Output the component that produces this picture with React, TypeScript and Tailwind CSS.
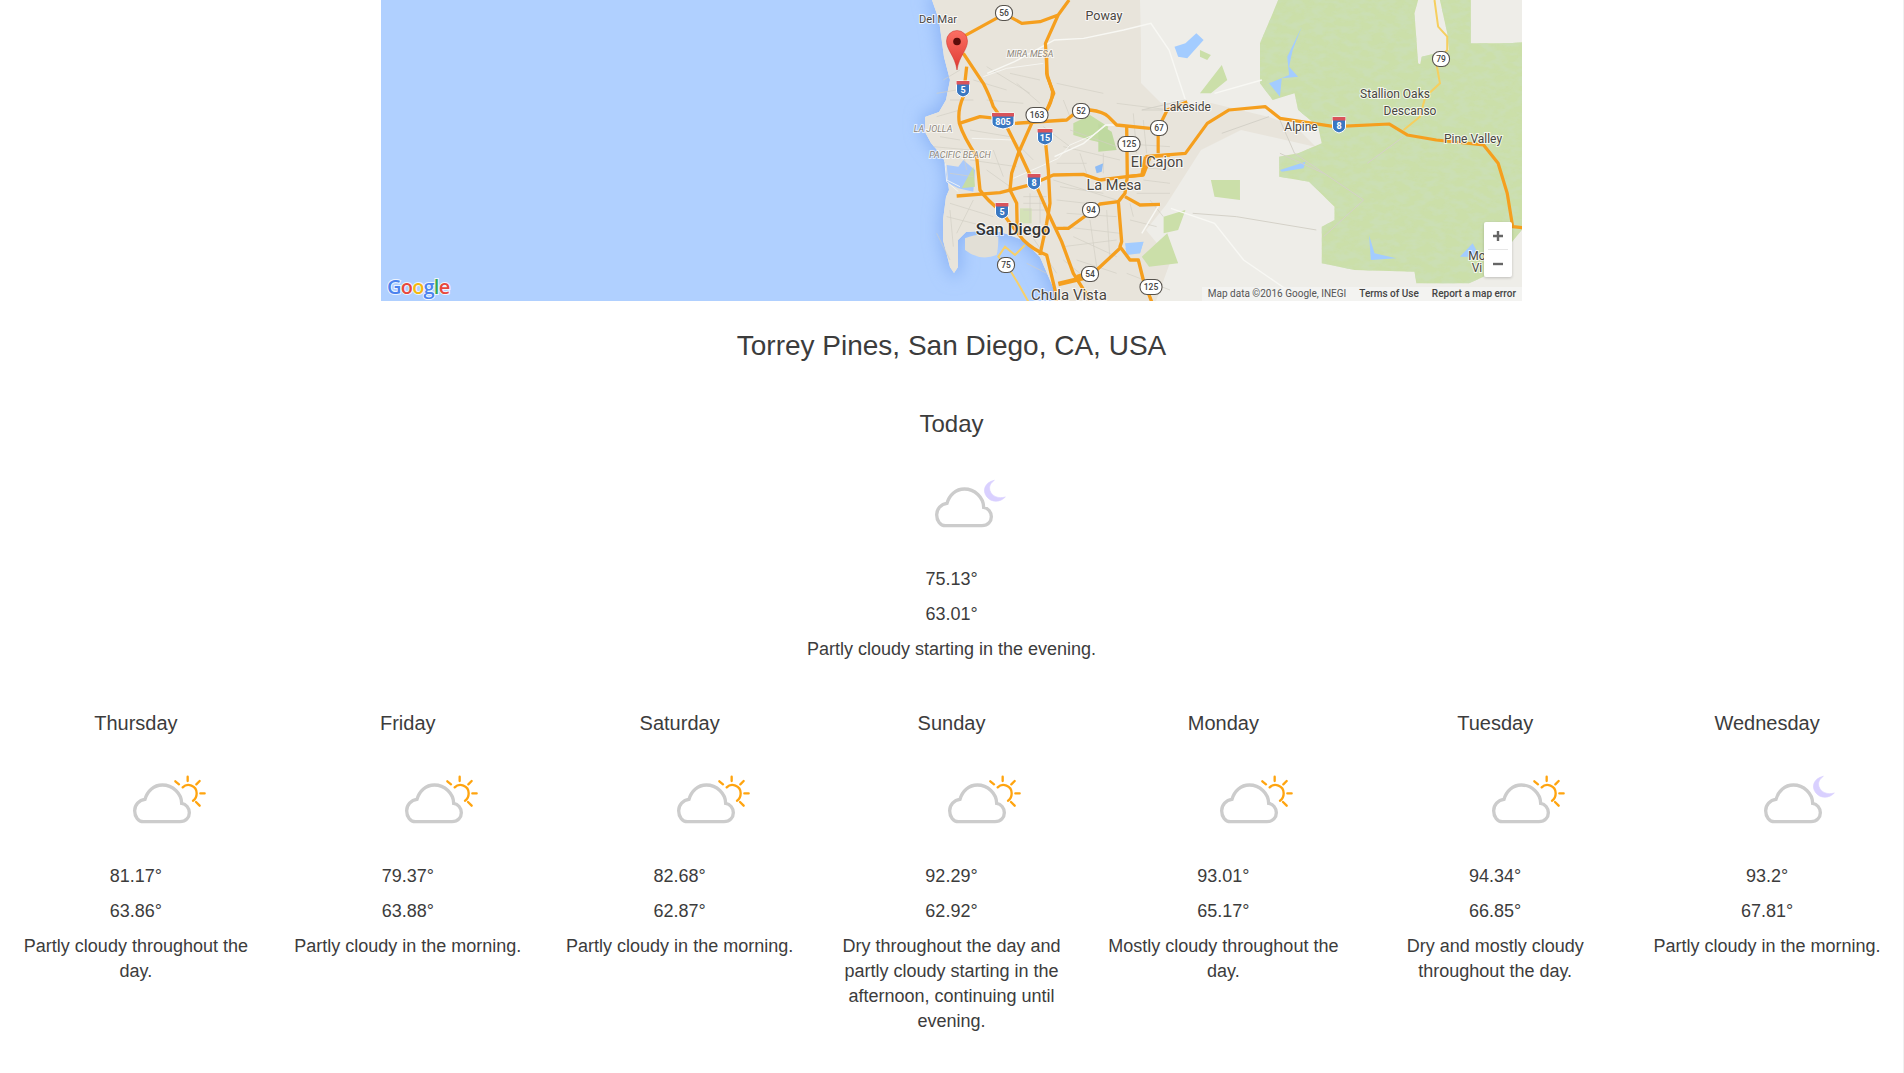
const days = [
  { name: "Thursday", hi: "81.17°", lo: "63.86°", text: "Partly cloudy throughout the day.", icon: "sun" },
  { name: "Friday", hi: "79.37°", lo: "63.88°", text: "Partly cloudy in the morning.", icon: "sun" },
  { name: "Saturday", hi: "82.68°", lo: "62.87°", text: "Partly cloudy in the morning.", icon: "sun" },
  { name: "Sunday", hi: "92.29°", lo: "62.92°", text: "Dry throughout the day and partly cloudy starting in the afternoon, continuing until evening.", icon: "sun" },
  { name: "Monday", hi: "93.01°", lo: "65.17°", text: "Mostly cloudy throughout the day.", icon: "sun" },
  { name: "Tuesday", hi: "94.34°", lo: "66.85°", text: "Dry and mostly cloudy throughout the day.", icon: "sun" },
  { name: "Wednesday", hi: "93.2°", lo: "67.81°", text: "Partly cloudy in the morning.", icon: "moon" },
];

const ORANGE = "#f59f1e";

const COAST =
  "M551,0 L558,20 L563,57 L569,80 L565,100 L558,112 L544,117 L544,132 L550,143 L562,157 L565,167 L568,190 L565,197 L562,220 L562,240 L569,267 L573,273 L577,267 L577,240 L585,232 L600,231 L620,232 L642,240 L659,257 L672,287 L676,301";

// coordenadas en px de los recortes del mapa
const roadsNear = [
  "M100,-20 L160,70 Q180,110 190,140 L225,190 L265,270 L300,345 L320,380 L355,460 L395,545 L430,640 L480,720",
  "M110,20 L100,110 Q82,150 88,190 Q100,230 140,290 L150,390 Q170,420 215,455 L240,490 L280,540 Q310,570 350,585 L375,690 L380,730",
  "M88,190 L150,170 L200,175 M255,190 L410,180 L440,155 L480,150 Q520,155 535,170 L560,195 L660,205",
  "M350,-10 L350,40 L368,95 Q365,130 350,150 L305,190 L265,280 L245,340 L240,390 L260,430 L262,520",
  "M345,230 L355,330 L360,430 L350,490 L330,585",
  "M80,408 L210,398 L300,375 L370,345 L460,343 L510,360 L590,350 L640,345 Q650,320 660,290 L720,285",
  "M590,195 L592,350 L585,400 L565,425 L575,545 L570,560 L600,600 L625,600 L640,660 L665,725",
  "M375,505 L415,505 L470,465 L510,432 L565,425 M585,410 L630,435 L690,433",
  "M440,650 L500,630 L570,565",
];

const cityStreets =
  "M20,170 L90,150 M30,230 L90,240 M10,260 L120,270 M60,120 L130,120 M130,60 L230,90 M170,120 L280,130 M120,210 L240,230 M240,40 L330,60 M380,70 L520,100 M400,120 L420,170 M560,130 L720,150 M610,160 L620,280 M640,180 L650,280 M560,250 L720,260 M420,210 L560,260 M400,260 L570,300 M450,280 L470,340 M520,280 L520,340 M60,430 L190,470 M50,470 L170,500 M80,520 L130,420 M280,410 L350,410 M280,430 L350,430 M280,450 L350,450 M300,400 L300,490 M330,400 L330,490 M370,360 L560,420 M380,420 L470,430 M410,460 L560,470 M400,500 L570,520 M430,530 L560,590 M400,560 L560,540 M400,600 L450,640 M480,480 L500,620 M530,450 L540,600 M300,520 L380,640 M290,610 L350,640 M610,320 L720,330 M640,360 L720,370 M620,400 L720,400 M600,480 L680,500 M120,300 L260,320 M170,330 L240,380 M190,270 L220,350 M100,280 L110,330 M250,240 L310,300 M340,200 L420,260 M60,450 L70,560 M20,520 L60,600 M380,310 L470,310 M40,60 L90,30 M20,100 L80,90 M60,340 L130,350 M390,380 L520,400 M600,430 L610,470 M660,420 L700,470 M440,600 L560,640 M590,640 L720,690 M170,20 L300,100 M260,70 L330,130";

const eastGreen =
  "M875,0 L860,40 L825,130 L825,250 L860,300 L920,280 L930,330 L985,380 L995,430 L930,460 L878,470 L878,530 L960,545 L1030,620 L1030,660 L995,680 L995,790 L1085,810 L1250,815 L1255,850 L1400,850 L1440,830 L1568,660 L1568,125 L1510,130 L1405,130 L1405,0 L1320,0 L1340,100 L1345,150 L1270,170 L1240,320 L1340,320 L1350,240 L1260,190 L1250,40 L1260,0 Z";

const shields: [number, number, string][] = [
  [623, 13, "56"], [656, 115, "163"], [700, 111, "52"], [778, 128, "67"], [748, 144, "125"],
  [710, 210, "94"], [625, 265, "75"], [709, 274, "54"], [770, 287, "125"], [1060, 59, "79"],
];

const interstates: [number, number, string][] = [
  [582, 89, "5"], [622, 121, "805"], [664, 137, "15"], [653, 182, "8"], [621, 211, "5"], [958, 125, "8"],
];

const labels: [number, number, string, number][] = [
  [557, 23, "Del Mar", 11], [723, 20, "Poway", 12.5], [806, 111, "Lakeside", 12], [1014, 98, "Stallion Oaks", 12],
  [1029, 115, "Descanso", 12], [920, 131, "Alpine", 12], [1092, 143, "Pine Valley", 12], [776, 167, "El Cajon", 14.5],
  [733, 190, "La Mesa", 14.5], [688, 300, "Chula Vista", 15], [1096, 260, "Mo", 12], [1096, 272, "Vi", 12],
];

const italics: [number, number, string][] = [
  [649, 57, "MIRA MESA"], [552, 132, "LA JOLLA"], [579, 158, "PACIFIC BEACH"],
];

function StateShield({ x, y, label }: { x: number; y: number; label: string }) {
  const w = label.length > 2 ? 22 : 17;
  return (
    <g>
      <rect x={x - w / 2} y={y - 7.5} width={w} height={15} rx={7} fill="#fff" stroke="#56524c" strokeWidth={1.1} />
      <text x={x} y={y + 3} textAnchor="middle" fontSize={8.5} fontWeight={500} fill="#444">{label}</text>
    </g>
  );
}

function Interstate({ x, y, label }: { x: number; y: number; label: string }) {
  const w = label.length > 2 ? 22 : label.length > 1 ? 15 : 13;
  const l = x - w / 2;
  return (
    <g>
      <path d={`M${l},${y - 8} h${w} v10 q0,4 -${w / 2},6 q-${w / 2},-2 -${w / 2},-6 Z`} fill="#3a78c2" stroke="#fff" strokeWidth={1} />
      <rect x={l} y={y - 8} width={w} height={3.5} fill="#d9535a" />
      <text x={x} y={y + 4} textAnchor="middle" fontSize={9} fontWeight={700} fill="#fff">{label}</text>
    </g>
  );
}

function MapArt() {
  return (
    <svg viewBox="0 0 1141 301" className="block h-[301px] w-[1141px] font-['Roboto',sans-serif]">
      <defs>
        <filter id="halo" x="-10%" y="-10%" width="120%" height="120%">
          <feGaussianBlur stdDeviation="8" />
        </filter>
        <filter id="terrain" x="0" y="0" width="100%" height="100%">
          <feTurbulence type="fractalNoise" baseFrequency="0.03 0.05" numOctaves="4" seed="7" result="noise" />
          <feColorMatrix
            in="noise"
            type="matrix"
            values="0 0 0 0 0.6  0 0 0 0 0.74  0 0 0 0 0.46  3 0 0 0 -1.15"
            result="tint"
          />
          <feComposite in="tint" in2="SourceAlpha" operator="in" result="shade" />
          <feMerge>
            <feMergeNode in="SourceGraphic" />
            <feMergeNode in="shade" />
          </feMerge>
        </filter>
        <linearGradient id="pin" x1="0" y1="0" x2="0" y2="1">
          <stop offset="0" stopColor="#fb6f64" />
          <stop offset="1" stopColor="#df3a32" />
        </linearGradient>
      </defs>
      <rect width="1141" height="301" fill="#b0d0ff" />
      <path d={`${COAST} L1141,301 L1141,0 Z`} fill="#8fb6f6" stroke="#8fb6f6" strokeWidth="8" filter="url(#halo)" />
      <path d={`${COAST} L1141,301 L1141,0 Z`} fill="#eeede8" />
      <path
        d={`${COAST} L775,301 L790,260 L765,230 L785,205 L820,150 L860,130 L935,147 L915,127 L888,117 L830,103 L780,103 L760,83 L760,43 L759,0 Z`}
        fill="#e8e4db"
      />

      {/* agua de Mission Bay, Coronado y parques */}
      <g transform="translate(549,60) scale(0.3333)">
        <path d="M50,315 L85,320 L100,300 L135,330 L130,395 L85,385 L55,370 Z" fill="#a9c9fb" />
        <path d="M95,385 L130,320 L135,380 Z" fill="#c5dca6" />
        <path d="M105,535 Q150,515 205,530 Q205,565 200,585 Q150,605 105,570 Z" fill="#e2dfd6" />
        <path d="M585,550 L640,545 L630,580 L590,580 Z" fill="#a3ccff" />
        <path d="M430,190 L480,165 L535,200 L520,250 L480,240 L430,225 Z" fill="#c4dca4" />
        <path d="M505,190 L545,215 L560,270 L505,275 Z" fill="#bfd9a0" />
        <path d="M270,445 L305,445 L305,490 L270,490 Z" fill="#d4e2b8" />
        <path d="M495,320 L520,310 L515,335 L500,340 Z" fill="#8ebcf5" />
        <path d={cityStreets} fill="none" stroke="#d2cec4" strokeWidth="2" />
        <path
          d="M160,50 L230,25 L340,10 M250,355 L330,320 L385,295 L420,255 L490,225 L530,195 L590,195 M125,235 L250,240 M45,310 L50,365 L85,395 M50,360 L90,380"
          fill="none"
          stroke="#f8f8f4"
          strokeWidth="2.5"
        />
      </g>

      {/* campo al este */}
      <g transform="translate(579,0) scale(0.3636,0.3333)">
        <path d={eastGreen} fill="#cbdfa9" filter="url(#terrain)" />
        <path
          d="M660,150 L690,165 L680,180 L660,170 Z M720,195 L735,240 L690,280 L660,280 Z M700,590 L690,540 L770,540 L770,600 Z M560,650 L620,630 L600,690 L560,700 Z M500,770 L570,700 L600,790 L520,800 Z"
          fill="#cbdfa9"
        />
        <path
          d="M590,140 L620,130 L650,100 L670,120 L625,175 L600,170 Z M940,80 L915,150 L905,200 L930,230 L885,235 L880,290 L850,250 L905,225 L900,170 Z M880,510 L950,485 L945,505 L885,515 Z M1125,705 L1130,780 L1200,775 L1140,760 Z M455,745 L505,725 L495,760 L460,765 Z M1375,770 L1410,730 L1430,770 Z"
          fill="#a3ccff"
        />
        <path
          d="M75,220 L150,185 L260,120 L340,115 L450,90 L525,70 L575,150 L620,300 M260,470 L340,430 L400,375 L430,375 M550,610 L500,700 M580,625 L700,670 L780,780 L900,870 M700,280 L830,240"
          fill="none"
          stroke="#f8f8f4"
          strokeWidth="1.4"
          vectorEffect="non-scaling-stroke"
        />
        <path
          d="M640,640 L760,650 L980,690 M620,300 L500,330 L690,330 M880,360 L920,460 L1110,600 L1000,710 M1220,410 L1120,490 M720,400 L850,350 M880,460 L1000,520"
          fill="none"
          stroke="#d4d1c8"
          strokeWidth="1"
          vectorEffect="non-scaling-stroke"
        />
        <path
          d="M1305,0 L1315,80 L1340,110 L1340,150 L1310,190 L1320,250 L1280,290 L1265,350 L1220,390"
          fill="none"
          stroke="#f6cf5f"
          strokeWidth="2"
          vectorEffect="non-scaling-stroke"
        />
        <path
          d="M0,115 L100,55 L120,40 L170,70 L220,65 L270,45 L300,0 M270,45 L235,130 L240,230 L258,280 L235,340 M510,470 L620,460 L680,370 L740,330 L840,320 L880,355 L1030,380 L1180,372 L1230,405 L1310,420 L1440,435 L1480,490 L1505,580 L1520,680 L1568,685 M545,385 L545,460 M545,385 L570,330 L625,305 M510,470 L500,525 L460,530"
          fill="none"
          stroke={ORANGE}
          strokeWidth="3.2"
          strokeLinejoin="round"
          vectorEffect="non-scaling-stroke"
        />
      </g>

      <g transform="translate(549,60) scale(0.3333)">
        <path d="M285,555 L255,585 L225,560 L205,590 L240,630 L270,680 L295,725" fill="none" stroke="#f8d06a" strokeWidth="6" />
        {roadsNear.map((d) => (
          <path key={d} d={d} fill="none" stroke={ORANGE} strokeWidth="10" strokeLinejoin="round" />
        ))}
        <path d="M385,672 L470,652" fill="none" stroke={ORANGE} strokeWidth="14" />
      </g>

      {shields.map(([x, y, label]) => (
        <StateShield key={`${x}-${label}`} x={x} y={y} label={label} />
      ))}
      {interstates.map(([x, y, label]) => (
        <Interstate key={`${x}-${label}`} x={x} y={y} label={label} />
      ))}

      {labels.map(([x, y, label, size]) => (
        <text key={label} x={x} y={y} textAnchor="middle" fontSize={size} fill="#4a463f" stroke="#fff" strokeOpacity={0.75} strokeWidth={2} paintOrder="stroke">
          {label}
        </text>
      ))}
      {italics.map(([x, y, label]) => (
        <text key={label} x={x} y={y} textAnchor="middle" fontSize={9} fontStyle="italic" fill="#8e867a" stroke="#fff" strokeOpacity={0.7} strokeWidth={2} paintOrder="stroke">
          {label}
        </text>
      ))}
      <text x={632} y={235} textAnchor="middle" fontSize={16.5} fontWeight={500} fill="#333" stroke="#fff" strokeOpacity={0.7} strokeWidth={2} paintOrder="stroke">
        San Diego
      </text>

      <path d="M576,70 C574,56 565.5,50 565.5,41 a10.5,10.5 0 1 1 21,0 C586.5,50 578,56 576,70 Z" fill="url(#pin)" stroke="#c9322b" strokeWidth="0.5" />
      <circle cx={576} cy={41.5} r={3.8} fill="#5b0d0a" />

      <text x={6} y={294} fontSize={20} fontWeight={600} stroke="#fff" strokeWidth={2} strokeOpacity={0.8} paintOrder="stroke" letterSpacing={-0.8} className="font-['Open_Sans',sans-serif]">
        <tspan fill="#4c83ee">G</tspan>
        <tspan fill="#e8483c">o</tspan>
        <tspan fill="#f5b90f">o</tspan>
        <tspan fill="#4c83ee">g</tspan>
        <tspan fill="#35a853">l</tspan>
        <tspan fill="#e8483c">e</tspan>
      </text>
    </svg>
  );
}

function MapPanel() {
  return (
    <div className="relative mx-auto h-[301px] w-[1141px] overflow-hidden">
      <MapArt />
      <div className="absolute right-0 bottom-0 flex h-[14px] items-center gap-[13px] bg-[#f5f5f5b3] px-[6px] font-['Roboto',sans-serif] text-[10px] leading-[14px] text-[#444]">
        <span className="text-[#555]">Map data ©2016 Google, INEGI</span>
        <span className="font-medium">Terms of Use</span>
        <span className="font-medium">Report a map error</span>
      </div>
      <div className="absolute top-[222px] right-[10px] flex h-[55px] w-[28px] flex-col items-center rounded-[2px] bg-white shadow-[0_1px_3px_rgba(0,0,0,0.2)]">
        <div className="flex h-[27px] w-full items-center justify-center">
          <svg width="12" height="12" viewBox="0 0 12 12">
            <path d="M6,1 V11 M1,6 H11" stroke="#666" strokeWidth="2.4" />
          </svg>
        </div>
        <div className="h-px w-[20px] bg-[#e6e6e6]" />
        <div className="flex h-[27px] w-full items-center justify-center">
          <svg width="12" height="12" viewBox="0 0 12 12">
            <path d="M1,6 H11" stroke="#666" strokeWidth="2.4" />
          </svg>
        </div>
      </div>
    </div>
  );
}

function WeatherIcon({ kind }: { kind: string }) {
  return (
    <svg width="120" height="80" viewBox="0 0 360 240" className="block">
      {kind === "sun" ? (
        <g fill="none" stroke="#ffa40f" strokeWidth="7" strokeLinecap="round">
          <path d="M248,82 C262,68 290,76 290,100 C290,110 286,118 279,122" />
          <path d="M263,50 V63 M226,64 L237,73 M299,63 L289,73 M301,100 H314 M288,126 L299,137" />
        </g>
      ) : (
        <path
          transform="translate(-8,-17)"
          d="M285,66 C256,72 248,97 262,115 C276,133 302,133 318,116 C297,122 278,114 272,97 C268,84 274,74 285,66 Z"
          fill="#d9d0ff"
          stroke="#d9d0ff"
          strokeWidth="2"
          strokeLinejoin="round"
        />
      )}
      <path
        d="M130,185 H240 C258,185 268,172 268,158 C268,144 258,132 245,130 C245,100 218,75 187,75 C162,75 142,92 135,118 C117,120 104,135 104,152 C104,170 115,185 130,185 Z"
        fill="none"
        stroke="#cccccc"
        strokeWidth="10"
      />
    </svg>
  );
}

export default function App() {
  return (
    <div className="min-h-[1073px] border-r border-[#f0f0f0] bg-white font-['Liberation_Sans',Arial,sans-serif] text-[18px] leading-[25px] text-[#3c3c3c]">
      <MapPanel />

      <h1 className="mt-[29px] text-center text-[28px] leading-[31px] font-normal">Torrey Pines, San Diego, CA, USA</h1>

      <section className="mt-[50px] text-center">
        <h2 className="text-[24px] leading-[26px] font-normal">Today</h2>
        <div className="mt-[27px] flex justify-center pl-[20px]">
          <WeatherIcon kind="moon" />
        </div>
        <p className="mt-[23px] mb-[10px]">75.13°</p>
        <p className="mb-[10px]">63.01°</p>
        <p>Partly cloudy starting in the evening.</p>
      </section>

      <section className="mt-[50px] grid grid-cols-7">
        {days.map((day) => (
          <div key={day.name} className="px-[15px] text-center">
            <h3 className="text-[20px] leading-[22px] font-normal">{day.name}</h3>
            <div className="mt-[26px] flex justify-center pl-[48px]">
              <WeatherIcon kind={day.icon} />
            </div>
            <p className="mt-[24px] mb-[10px]">{day.hi}</p>
            <p className="mb-[10px]">{day.lo}</p>
            <p>{day.text}</p>
          </div>
        ))}
      </section>
    </div>
  );
}
